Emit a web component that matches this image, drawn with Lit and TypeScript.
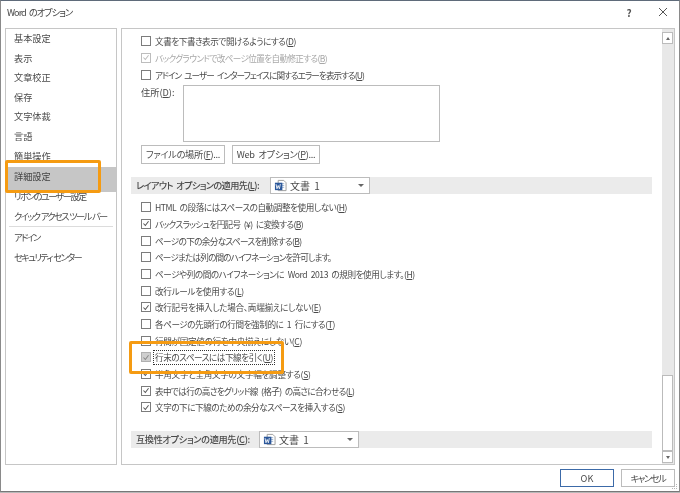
import { LitElement, html, css, svg } from "lit";
import { customElement } from "lit/decorators.js";

const word = svg`<svg class="wi" width="13" height="13" viewBox="0 0 14 14"><path d="M4.5 1.5h6l2.5 2.5v8.5h-8.5z" fill="#fff" stroke="#9a9a9a"/><path d="M7 5h4M7 7h4M7 9h4" stroke="#9fb4d0"/><rect x="1" y="4" width="8" height="8" fill="#2b579a"/><path d="M2.2 5.5l1 5 1.3-3.5 1.3 3.5 1-5" fill="none" stroke="#fff" stroke-width=".9"/></svg>`;
const check = svg`<svg width="11" height="11" viewBox="0 0 11 11"><path d="M2 5.5l2.6 2.8L9 2.4" fill="none" stroke="currentColor" stroke-width="1.4"/></svg>`;

const k = (t: string) => html`(<u>${t}</u>)`;

@customElement("app-root")
export class AppRoot extends LitElement {
  static styles = css`
    :host { display: block; width: 680px; height: 493px; font-family: "Noto Sans CJK JP", "Liberation Sans", sans-serif; font-size: 9.2px; font-feature-settings: "palt"; color: #4a4a4a; overflow: hidden; background: #b8b8b8; }
    .win { box-sizing: border-box; width: 680px; height: 492px; background: #fff; border: 1px solid #8a8a8a; border-top: 1px solid #5f6b7a; border-bottom: 1px solid #777; display: flex; flex-direction: column; position: relative; filter: blur(0.3px); }
    .title { height: 27px; flex: none; display: flex; align-items: center; padding: 0 0 5px 6px; box-sizing: border-box; color: #444; letter-spacing: -1px; word-spacing: 2px; }
    .title .sp { flex: 1; }
    .help { width: 14px; text-align: center; margin-right: 22px; font-size: 10px; font-weight: 700; color: #555; letter-spacing: 0; }
    .x { margin-right: 11px; display: flex; }
    .main { display: flex; height: 437px; flex: none; padding: 0 4px; gap: 4px; }
    .nav { box-sizing: border-box; width: 112px; flex: none; border: 1px solid #c6c6c6; display: flex; flex-direction: column; }
    .nav div { height: 19.6px; line-height: 19.6px; padding-left: 8px; flex: none; white-space: nowrap; }
    .nav .kana { letter-spacing: -1.6px; word-spacing: 1px; }
    .nav .sel { background: #c6c6c6; height: 25px; line-height: 18px; margin-top: 1px; color: #444; }
    .nav .after { margin-top: -5px; }
    .nav .sep { height: 1px; background: #dcdcdc; margin: 0 3px 1px; padding: 0; }
    .content { box-sizing: border-box; flex: 1; border: 1px solid #c6c6c6; display: flex; min-width: 0; }
    .scroll { flex: 1; min-width: 0; display: flex; flex-direction: column; padding: 4px 10px 0 9px; }
    .row { height: 16.67px; display: flex; align-items: center; white-space: nowrap; flex: none; padding-left: 10px; gap: 4px; font-size: 8.6px; letter-spacing: -0.45px; word-spacing: 2px; }
    .row.t3 { letter-spacing: -0.3px; }
    .row.t6 { letter-spacing: -0.64px; }
    .row.t8 { letter-spacing: -0.82px; }
    .row.t9 { letter-spacing: -0.95px; }
    .row.dim { color: #a8a8a8; }
    .cb { box-sizing: border-box; width: 10px; height: 10px; border: 1px solid #7c7c7c; background: #fff; color: #555; display: flex; align-items: center; justify-content: center; flex: none; }
    .cb svg { width: 9px; height: 9px; }
    .row.dim .cb { border-color: #bdbdbd; color: #bbb; }
    .cb.grey { background: #cfcfcf; border-color: #b0b0b0; color: #888; }
    .focus { outline: 1px dotted #333; padding: 0 1px; margin-left: -1px; line-height: 13px; }
    .addr { display: flex; padding-left: 10px; height: 57px; margin: 2px 0 3px; flex: none; }
    .addr span { width: 42px; flex: none; margin-top: 0; }
    .addr .box { box-sizing: border-box; width: 257px; flex: none; border: 1px solid #bcbcbc; height: 57px; }
    .btns { display: flex; gap: 7px; padding-left: 10px; flex: none; margin-bottom: 13px; }
    .btn { box-sizing: border-box; height: 19px; border: 1px solid #bcbcbc; display: flex; align-items: center; justify-content: center; background: #fff; white-space: nowrap; }
    .b1, .b2 { letter-spacing: -0.3px; word-spacing: 2px; }
    .b1 { width: 84px; } .b2 { width: 88px; }
    .head { height: 17px; background: #ebebeb; display: flex; align-items: center; padding-left: 5px; font-weight: 500; flex: none; white-space: nowrap; word-spacing: 2px; }
    .l1 { width: 134px; flex: none; letter-spacing: -0.65px; } .l2 { width: 123px; flex: none; letter-spacing: -0.35px; }
    .dd { box-sizing: border-box; width: 100px; height: 17px; border: 1px solid #bcbcbc; background: #fff; display: flex; align-items: center; padding-left: 3px; gap: 3px; font-weight: 400; position: relative; font-size: 10px; }
    .caret { position: absolute; right: 5px; top: 6px; width: 0; height: 0; border: 3px solid transparent; border-top: 3.5px solid #666; border-bottom: 0; }
    .list { padding: 5px 0 15px; flex: none; }
    .sb { width: 12px; flex: none; background: #e8e8e8; display: flex; flex-direction: column; }
    .sb .a { box-sizing: border-box; height: 12px; margin-top: 3px; width: 11px; background: #fff; border: 1px solid #bbb; display: flex; align-items: center; justify-content: center; }
    .tri { width: 0; height: 0; border-left: 2.5px solid transparent; border-right: 2.5px solid transparent; border-bottom: 3px solid #666; }
    .tri.d { border-bottom: 0; border-top: 3px solid #666; }
    .sb .gap { flex: 1; }
    .sb .thumb { box-sizing: border-box; height: 76px; background: #fff; border: 1px solid #bbb; width: 11px; }
    .sb .a.b { margin-top: 0; height: 12px; margin-bottom: 1px; }
    .foot { flex: 1; display: flex; justify-content: flex-end; align-items: flex-start; gap: 7px; padding: 4px 4px 0 0; }
    .foot .btn { width: 54px; height: 18px; }
    .foot .ok { border: 1px solid #3c6aa8; }
    .foot .cancel { letter-spacing: -1.4px; }
    .hl { position: absolute; box-sizing: border-box; border: 3px solid #f59b12; border-radius: 2px; }
    .h1 { left: 4px; top: 159px; width: 96px; height: 33px; }
    .h2 { left: 128px; top: 340px; width: 155px; height: 33px; }
    .grip { position: absolute; right: 1px; bottom: 1px; display: flex; }
  `;

  render() {
    const x = html`<span class="cb"></span>`;
    const c = html`<span class="cb">${check}</span>`;
    return html`<div class="win">
      <div class="title">Word のオプション<span class="sp"></span><span class="help">?</span>
        <span class="x"><svg width="10" height="10" viewBox="0 0 10 10"><path d="M1 1l8 8M9 1l-8 8" stroke="#555" fill="none"/></svg></span></div>
      <div class="main">
        <div class="nav">
          <div>基本設定</div><div>表示</div><div>文章校正</div><div>保存</div><div>文字体裁</div><div>言語</div><div>簡単操作</div>
          <div class="sel">詳細設定</div>
          <div class="after kana">リボンのユーザー設定</div><div class="kana">クイック アクセス ツール バー</div>
          <div class="sep"></div>
          <div class="kana">アドイン</div><div class="kana">セキュリティ センター</div>
        </div>
        <div class="content">
          <div class="scroll">
            <div class="row">${x}<span>文書を下書き表示で開けるようにする${k("D")}</span></div>
            <div class="row dim t6">${c}<span>バックグラウンドで改ページ位置を自動修正する${k("B")}</span></div>
            <div class="row t9">${x}<span>アドイン ユーザー インターフェイスに関するエラーを表示する${k("U")}</span></div>
            <div class="addr"><span>住所${k("D")}:</span><div class="box"></div></div>
            <div class="btns"><div class="btn b1"><span>ファイルの場所${k("F")}...</span></div><div class="btn b2"><span>Web オプション${k("P")}...</span></div></div>
            <div class="head"><span class="l1">レイアウト オプションの適用先${k("L")}:</span><div class="dd">${word}<span>文書 1</span><span class="caret"></span></div></div>
            <div class="list">
              <div class="row">${x}<span>HTML の段落にはスペースの自動調整を使用しない${k("H")}</span></div>
              <div class="row t6">${c}<span>バックスラッシュを円記号 (¥) に変換する${k("B")}</span></div>
              <div class="row t6">${x}<span>ページの下の余分なスペースを削除する${k("B")}</span></div>
              <div class="row t8">${x}<span>ページまたは列の間のハイフネーションを許可します。</span></div>
              <div class="row">${x}<span>ページや列の間のハイフネーションに Word 2013 の規則を使用します。${k("H")}</span></div>
              <div class="row t3">${x}<span>改行ルールを使用する${k("L")}</span></div>
              <div class="row t3">${c}<span>改行記号を挿入した場合、両端揃えにしない${k("E")}</span></div>
              <div class="row">${x}<span>各ページの先頭行の行間を強制的に 1 行にする${k("T")}</span></div>
              <div class="row t3">${x}<span>行間が固定値の行を中央揃えにしない${k("C")}</span></div>
              <div class="row"><span class="cb grey">${check}</span><span class="focus">行末のスペースには下線を引く${k("U")}</span></div>
              <div class="row t3">${c}<span>半角文字と全角文字の文字幅を調整する${k("S")}</span></div>
              <div class="row t6">${c}<span>表中では行の高さをグリッド線 (格子) の高さに合わせる${k("L")}</span></div>
              <div class="row">${c}<span>文字の下に下線のための余分なスペースを挿入する${k("S")}</span></div>
            </div>
            <div class="head"><span class="l2">互換性オプションの適用先${k("C")}:</span><div class="dd">${word}<span>文書 1</span><span class="caret"></span></div></div>
          </div>
          <div class="sb"><div class="a"><span class="tri"></span></div><div class="gap"></div><div class="thumb"></div><div class="a b"><span class="tri d"></span></div></div>
        </div>
      </div>
      <div class="foot"><div class="btn ok"><span>OK</span></div><div class="btn cancel"><span>キャンセル</span></div></div>
      <span class="grip"><svg width="6" height="6" viewBox="0 0 6 6" fill="#b5b5b5"><rect x="4" y="0" width="1" height="1"/><rect x="2" y="2" width="1" height="1"/><rect x="4" y="2" width="1" height="1"/><rect x="0" y="4" width="1" height="1"/><rect x="2" y="4" width="1" height="1"/><rect x="4" y="4" width="1" height="1"/></svg></span>
      <div class="hl h1"></div><div class="hl h2"></div>
    </div>`;
  }
}
